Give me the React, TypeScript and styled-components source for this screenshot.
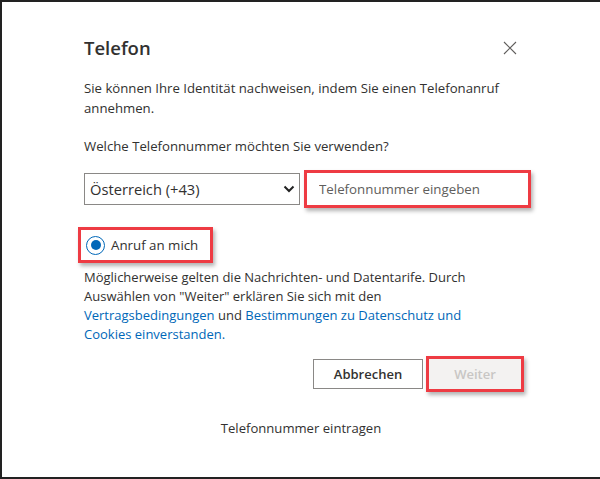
import React from "react";
import styled, { createGlobalStyle } from "styled-components";

const Global = createGlobalStyle`
  html, body { margin: 0; padding: 0; background: #fff; }
  body { font-family: "Open Sans", "Noto Sans", Arial, sans-serif; color: #323130; }
  * { box-sizing: border-box; }
`;

const Frame = styled.div`
  width: 600px;
  height: 479px;
  border-top: 2px solid #222;
  border-left: 2px solid #222;
  border-bottom: 2px solid #222;
  display: flex;
  flex-direction: column;
  padding-top: 24px;
`;

const Content = styled.div`
  margin-left: 82px;
  width: 448px;
  display: flex;
  flex-direction: column;
`;

const Header = styled.div`
  height: 44px;
  display: flex;
  align-items: center;
  justify-content: space-between;
`;

const Title = styled.h1`
  margin: 0;
  font-size: 18.5px;
  font-weight: 600;
  line-height: 28px;
  color: #323130;
`;

const CloseButton = styled.button`
  width: 28px;
  height: 28px;
  margin-right: 8px;
  border: none;
  background: transparent;
  padding: 0;
  display: flex;
  align-items: center;
  justify-content: center;
  color: #605e5c;
`;

const Text = styled.p<{ $top: number; $lh?: number; $size?: number; $width?: number }>`
  margin: ${(p) => p.$top}px 0 0 0;
  font-size: ${(p) => p.$size ?? 13.2}px;
  line-height: ${(p) => p.$lh ?? 20}px;
  max-width: ${(p) => p.$width ?? 448}px;
  color: #323130;
`;

const Link = styled.a`
  color: #0067b8;
  text-decoration: none;
`;

const InputRow = styled.div`
  margin-top: 14px;
  display: flex;
  align-items: center;
  gap: 4px;
`;

const SelectBox = styled.div`
  width: 216px;
  height: 32px;
  border: 1px solid #8a8886;
  display: flex;
  align-items: center;
  justify-content: space-between;
  padding: 0 4px 0 5px;
  font-size: 14.7px;
  color: #323130;
`;

const Highlight = styled.div<{ $ml?: number }>`
  border: 3px solid #ee3b43;
  box-shadow: 2px 3px 4px rgba(0, 0, 0, 0.3);
  margin-left: ${(p) => p.$ml ?? 0}px;
  display: flex;
  align-items: center;
`;

const PhoneInput = styled.input`
  width: 221px;
  height: 32px;
  border: none;
  outline: none;
  padding: 0 0 0 12px;
  font-family: inherit;
  font-size: 13.3px;
  color: #323130;
  &::placeholder { color: #605e5c; }
`;

const RadioWrap = styled.div`
  margin-top: 19px;
  display: flex;
`;

const RadioLabel = styled.label`
  height: 30px;
  display: flex;
  align-items: center;
  gap: 6px;
  padding: 0 12px 0 5px;
  font-size: 13.3px;
  color: #323130;
`;

const RadioCircle = styled.span`
  width: 19px;
  height: 19px;
  border-radius: 50%;
  border: 1.5px solid #0067b8;
  display: flex;
  align-items: center;
  justify-content: center;
  &::after {
    content: "";
    width: 10px;
    height: 10px;
    border-radius: 50%;
    background: #0067b8;
  }
`;

const ButtonRow = styled.div`
  margin-top: 12px;
  display: flex;
  justify-content: flex-end;
  align-items: center;
  gap: 3px;
  padding-right: 8px;
`;

const Button = styled.button<{ $disabled?: boolean }>`
  height: 30px;
  min-width: ${(p) => (p.$disabled ? 92 : 110)}px;
  padding: 0 16px;
  font-family: inherit;
  font-size: 13px;
  font-weight: 600;
  border: ${(p) => (p.$disabled ? "none" : "1px solid #8a8886")};
  background: ${(p) => (p.$disabled ? "#f3f2f1" : "#fff")};
  color: ${(p) => (p.$disabled ? "#c8c6c4" : "#323130")};
`;

const Footer = styled.div`
  margin-top: 26px;
  text-align: center;
  font-size: 13.1px;
  line-height: 20px;
  color: #323130;
`;

export default function App() {
  return (
    <>
      <Global />
      <Frame>
        <Content>
          <Header>
            <Title>Telefon</Title>
            <CloseButton aria-label="Schließen">
              <svg width="14" height="14" viewBox="0 0 14 14">
                <path d="M1 1 L13 13 M13 1 L1 13" stroke="#605e5c" strokeWidth="1.1" fill="none" />
              </svg>
            </CloseButton>
          </Header>
          <Text $top={8}>
            Sie können Ihre Identität nachweisen, indem Sie einen Telefonanruf annehmen.
          </Text>
          <Text $top={18}>Welche Telefonnummer möchten Sie verwenden?</Text>
          <InputRow>
            <SelectBox>
              <span>Österreich (+43)</span>
              <svg width="12" height="8" viewBox="0 0 12 8">
                <path d="M1.5 1.5 L6 6 L10.5 1.5" stroke="#222" strokeWidth="2" fill="none" />
              </svg>
            </SelectBox>
            <Highlight>
              <PhoneInput placeholder="Telefonnummer eingeben" />
            </Highlight>
          </InputRow>
          <RadioWrap>
            <Highlight $ml={-6}>
              <RadioLabel>
                <RadioCircle />
                Anruf an mich
              </RadioLabel>
            </Highlight>
          </RadioWrap>
          <Text $top={5} $lh={19} $size={13} $width={410}>
            Möglicherweise gelten die Nachrichten- und Datentarife. Durch Auswählen von "Weiter" erklären Sie sich mit den{" "}
            <Link>Vertragsbedingungen</Link> und <Link>Bestimmungen zu Datenschutz und Cookies einverstanden.</Link>
          </Text>
          <ButtonRow>
            <Button>Abbrechen</Button>
            <Highlight>
              <Button $disabled>Weiter</Button>
            </Highlight>
          </ButtonRow>
        </Content>
        <Footer>Telefonnummer eintragen</Footer>
      </Frame>
    </>
  );
}
